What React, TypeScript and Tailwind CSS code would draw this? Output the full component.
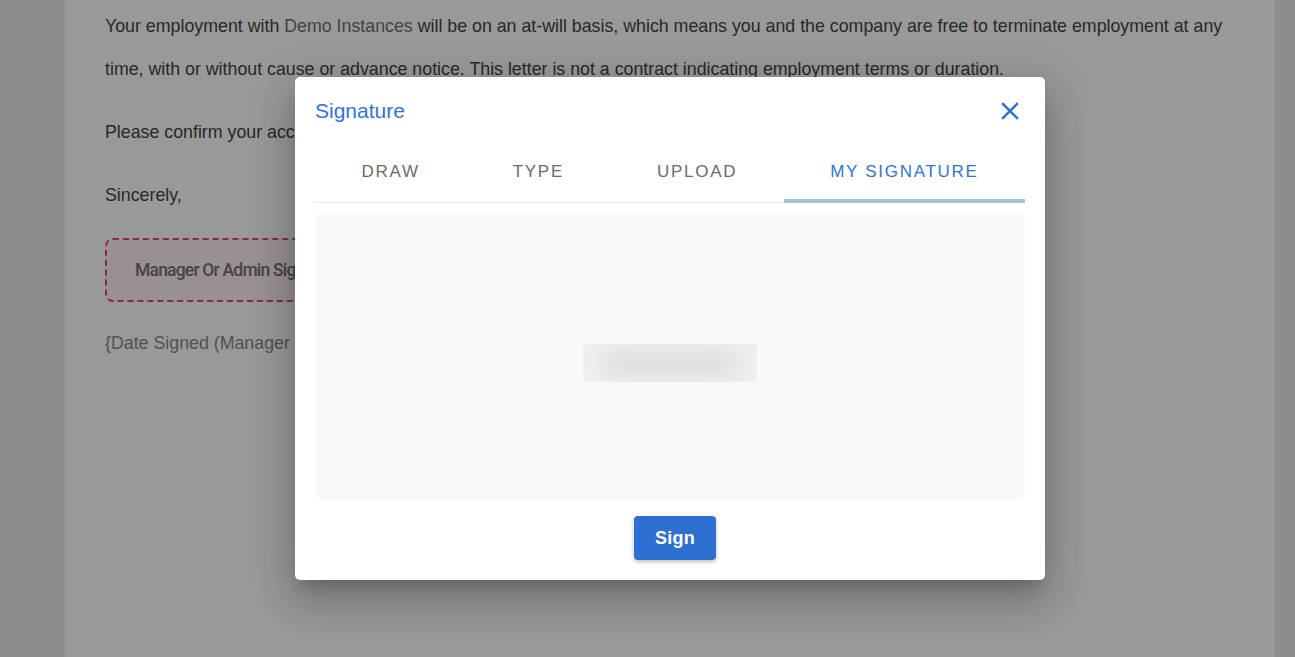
import { useState } from 'react';

const tabs = ['Draw', 'Type', 'Upload', 'My Signature'];

function SignatureModal() {
  const [active, setActive] = useState(3);

  return (
    <div className="w-[750px] h-[503px] bg-white rounded-[5px] px-5 pt-5 pb-5 flex flex-col font-['Liberation_Sans',Arial,sans-serif] shadow-[0_11px_15px_-7px_rgba(0,0,0,0.2),0_24px_38px_3px_rgba(0,0,0,0.14),0_9px_46px_8px_rgba(0,0,0,0.12)]">
      {/* Header */}
      <div className="flex items-center justify-between h-7">
        <h2 className="text-[21px] text-[#3175d3] leading-7">Signature</h2>
        <button className="w-[30px] h-[30px] flex items-center justify-center text-[#2f72d1]">
          <svg viewBox="0 0 24 24" width="30" height="30" fill="currentColor">
            <path d="M19 6.41 17.59 5 12 10.59 6.41 5 5 6.41 10.59 12 5 17.59 6.41 19 12 13.41 17.59 19 19 17.59 13.41 12z" />
          </svg>
        </button>
      </div>

      {/* Tabs */}
      <div className="mt-4 flex border-b border-[#e8e8e8]">
        {tabs.map((t, i) => (
          <button
            key={t}
            onClick={() => setActive(i)}
            className={`flex-auto h-[61px] relative uppercase text-[17px] tracking-[1.7px] ${
              active === i ? 'text-[#3175d3]' : 'text-[#6b6b6b]'
            }`}
          >
            {t}
            {active === i && <span className="absolute left-0 right-0 -bottom-px h-[4px] bg-[#a9c2dc]" />}
          </button>
        ))}
      </div>

      {/* Signature preview */}
      <div className="mt-[11px] h-[287px] bg-[#f8f9fb] rounded-md flex items-center justify-center pt-[11px]">
        <div className="w-[174px] h-[38px] overflow-hidden bg-[#f1f1f3] relative">
          <div className="absolute left-4 right-4 top-2 bottom-2 rounded-full bg-[#d8d8da] blur-md" />
        </div>
      </div>

      {/* Action */}
      <div className="mt-4 flex justify-center pl-[10px]">
        <button className="w-[82px] h-[44px] rounded-[4px] bg-[#2d70d2] text-white text-[18px] font-bold tracking-[0.3px] shadow-[0_2px_4px_rgba(0,0,0,0.25)]">
          Sign
        </button>
      </div>
    </div>
  );
}

export default function App() {
  return (
    <div className="relative w-full h-[657px] overflow-hidden bg-[#ebebeb] font-['Liberation_Sans',Arial,sans-serif]">
      {/* Letter document */}
      <div className="ml-[65px] mr-[20px] h-full bg-white px-10 pt-[5px] text-[17.8px] leading-[43px] text-[#444]">
        <p className="mb-5">
          Your employment with <span className="text-[#707070]">Demo Instances</span> will be on an at-will basis, which
          means you and the company are free to terminate employment at any time, with or without cause or advance
          notice. This letter is not a contract indicating employment terms or duration.
        </p>
        <p className="mb-5">Please confirm your acceptance of this offer by signing and returning this letter.</p>
        <p className="mb-[21px]">Sincerely,</p>
        <div className="w-[300px] h-16 rounded-lg border-2 border-dashed border-[#e04a7c] bg-[#fdf1f5] flex items-center pl-7 font-['Roboto',sans-serif] font-medium text-[17.5px] tracking-[-0.8px] text-[#747474]">
          Manager Or Admin Signature
        </div>
        <p className="mt-5 text-[#888]">{'{Date Signed (Manager Or Admin)}'}</p>
      </div>

      {/* Overlay */}
      <div className="absolute inset-0 bg-black/40 flex items-center justify-center pl-[45px]">
        <SignatureModal />
      </div>
    </div>
  );
}
